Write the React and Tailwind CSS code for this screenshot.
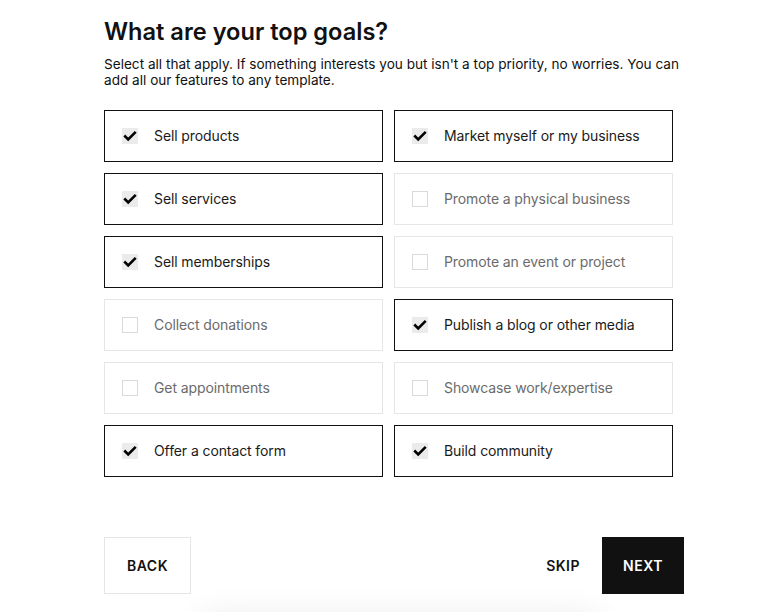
import React, { useState } from "react";

const goals = [
  ["Sell products", true],
  ["Market myself or my business", true],
  ["Sell services", true],
  ["Promote a physical business", false],
  ["Sell memberships", true],
  ["Promote an event or project", false],
  ["Collect donations", false],
  ["Publish a blog or other media", true],
  ["Get appointments", false],
  ["Showcase work/expertise", false],
  ["Offer a contact form", true],
  ["Build community", true],
];

const Check = () => (
  <svg width="16" height="16" viewBox="0 0 16 16" fill="none">
    <path d="M3.2 8.4l3 3L12.8 4.8" stroke="#000" strokeWidth="2.6" strokeLinecap="square" />
  </svg>
);

export default function App() {
  const [selected, setSelected] = useState(goals.map((g) => g[1]));

  const toggle = (i) => setSelected((s) => s.map((v, j) => (j === i ? !v : v)));

  return (
    <div className="relative h-[612px] overflow-hidden bg-white font-['Inter','Liberation_Sans',sans-serif]">
      <div className="ml-[104px] w-[580px] pt-[16px]">
        <h1 className="text-[23.6px] leading-[32px] font-semibold text-[#111]">
          What are your top goals?
        </h1>
        <p className="mt-[8px] text-[13.6px] leading-[16px] text-[#111]">
          Select all that apply. If something interests you but isn't a top priority, no worries. You can add all our features to any template.
        </p>

        <div className="mt-[22px] grid w-[569px] grid-cols-2 gap-x-[11px] gap-y-[11px]">
          {goals.map(([label], i) => {
            const on = selected[i];
            return (
              <button
                key={label}
                onClick={() => toggle(i)}
                className={
                  "flex h-[52px] items-center border text-left " +
                  (on ? "border-[#111]" : "border-[#e6e6e6]")
                }
              >
                <span
                  className={
                    "ml-[17px] flex h-[16px] w-[16px] items-center justify-center " +
                    (on ? "bg-[#ebebeb]" : "border border-[#dadada]")
                  }
                >
                  {on && <Check />}
                </span>
                <span
                  className={
                    "ml-[16px] -mt-[2px] text-[14px] tracking-[-0.1px] " + (on ? "text-[#1a1a1a]" : "text-[#6b6b6b]")
                  }
                >
                  {label}
                </span>
              </button>
            );
          })}
        </div>

        <div className="mt-[60px] flex items-center justify-between">
          <button className="flex h-[57px] w-[87px] items-center justify-center border border-[#e6e6e6] text-[14px] font-semibold tracking-[0.5px] text-[#111]">
            BACK
          </button>
          <div className="flex items-center">
            <button className="mr-[22px] text-[14px] font-semibold tracking-[0.5px] text-[#111]">SKIP</button>
            <button className="flex h-[57px] w-[82px] items-center justify-center bg-[#111] text-[14px] font-semibold tracking-[0.5px] text-white">
              NEXT
            </button>
          </div>
        </div>
      </div>

      <div className="absolute left-[200px] top-[618px] h-[40px] w-[400px] rounded-[20px] bg-white shadow-[0_0_30px_8px_rgba(0,0,0,0.06)]" />
    </div>
  );
}
